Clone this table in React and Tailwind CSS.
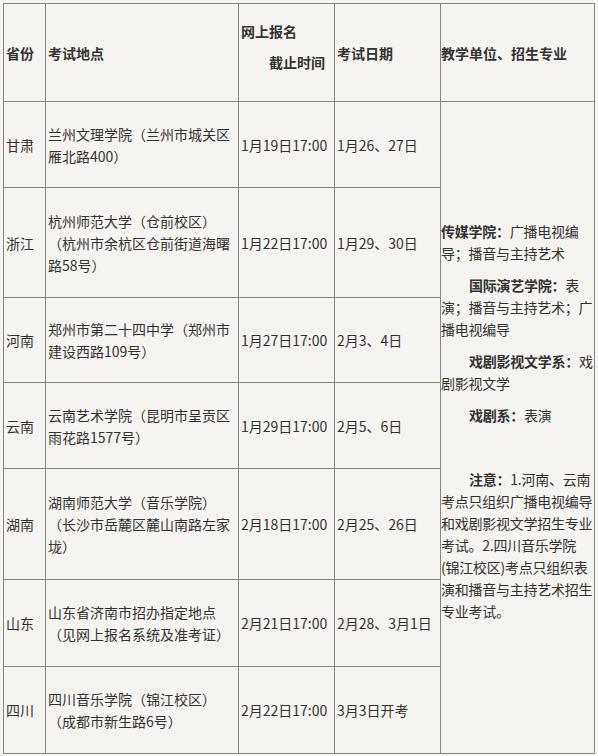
import React from "react";

const rows = [
  {
    prov: "甘肃",
    place: ["兰州文理学院（兰州市城关区", "雁北路400）"],
    deadline: "1月19日17:00",
    date: "1月26、27日",
    h: "h-[86px]",
  },
  {
    prov: "浙江",
    place: ["杭州师范大学（仓前校区）", "（杭州市余杭区仓前街道海曙", "路58号）"],
    deadline: "1月22日17:00",
    date: "1月29、30日",
    h: "h-[110px]",
  },
  {
    prov: "河南",
    place: ["郑州市第二十四中学（郑州市", "建设西路109号）"],
    deadline: "1月27日17:00",
    date: "2月3、4日",
    h: "h-[85px]",
  },
  {
    prov: "云南",
    place: ["云南艺术学院（昆明市呈贡区", "雨花路1577号）"],
    deadline: "1月29日17:00",
    date: "2月5、6日",
    h: "h-[86px]",
  },
  {
    prov: "湖南",
    place: ["湖南师范大学（音乐学院）", "（长沙市岳麓区麓山南路左家", "垅）"],
    deadline: "2月18日17:00",
    date: "2月25、26日",
    h: "h-[111px]",
  },
  {
    prov: "山东",
    place: ["山东省济南市招办指定地点", "（见网上报名系统及准考证）"],
    deadline: "2月21日17:00",
    date: "2月28、3月1日",
    h: "h-[87px]",
  },
  {
    prov: "四川",
    place: ["四川音乐学院（锦江校区）", "（成都市新生路6号）"],
    deadline: "2月22日17:00",
    date: "3月3日开考",
    h: "h-[87px]",
  },
];

function Lines({ lines }) {
  return lines.map((l, i) => (
    <div key={i} className="whitespace-nowrap">
      {l}
    </div>
  ));
}

// right column, one block spanning all rows
function Majors() {
  return (
    <div className="tracking-[-0.25px] whitespace-nowrap">
      <p>
        <b>传媒学院：</b>广播电视编
        <br />
        导；播音与主持艺术
      </p>
      <p className="mt-[10px] indent-[28px]">
        <b>国际演艺学院：</b>表
        <br />
        演；播音与主持艺术；广
        <br />
        播电视编导
      </p>
      <p className="mt-[10px] indent-[28px]">
        <b>戏剧影视文学系：</b>戏
        <br />
        剧影视文学
      </p>
      <p className="mt-[10px] indent-[28px]">
        <b>戏剧系：</b>表演
      </p>
      <p className="mt-[10px] h-[22px]" />
      <p className="mt-[10px] indent-[28px]">
        <b>注意：</b>1.河南、云南
        <br />
        考点只组织广播电视编导
        <br />
        和戏剧影视文学招生专业
        <br />
        考试。2.四川音乐学院
        <br />
        (锦江校区)考点只组织表
        <br />
        演和播音与主持艺术招生
        <br />
        专业考试。
      </p>
    </div>
  );
}

export default function App() {
  const cell = "border border-[#858585] align-middle px-[2px] py-0";
  return (
    <div
      className="w-[598px] h-[756px] bg-[#f5f4f0] pt-[3px] pl-[3px] text-[14px] leading-[22px] text-[#333333] overflow-hidden"
      style={{ fontFamily: '"Noto Sans CJK SC", "Noto Sans", sans-serif' }}
    >
      <table className="table-fixed border-collapse w-[591px]">
        <colgroup>
          <col className="w-[42px]" />
          <col className="w-[193px]" />
          <col className="w-[96px]" />
          <col className="w-[106px]" />
          <col className="w-[154px]" />
        </colgroup>
        <tbody>
          <tr className="h-[98px] font-bold">
            <td className={cell}>省份</td>
            <td className={cell}>考试地点</td>
            <td className={`${cell} pb-[12px]`}>
              <div className="flex flex-col gap-[9px]">
                <div>网上报名</div>
                <div className="pl-[28px] whitespace-nowrap">截止时间</div>
              </div>
            </td>
            <td className={cell}>考试日期</td>
            <td className="border border-[#858585] align-middle p-0">教学单位、招生专业</td>
          </tr>
          {rows.map((r, i) => (
            <tr key={r.prov} className={r.h}>
              <td className={cell}>{r.prov}</td>
              <td className={cell}>
                <Lines lines={r.place} />
              </td>
              <td className={`${cell} whitespace-nowrap`}>{r.deadline}</td>
              <td className={`${cell} whitespace-nowrap`}>{r.date}</td>
              {i === 0 && (
                <td
                  rowSpan={7}
                  className="border border-[#858585] align-middle p-0 pb-[14px]"
                >
                  <Majors />
                </td>
              )}
            </tr>
          ))}
        </tbody>
      </table>
    </div>
  );
}
